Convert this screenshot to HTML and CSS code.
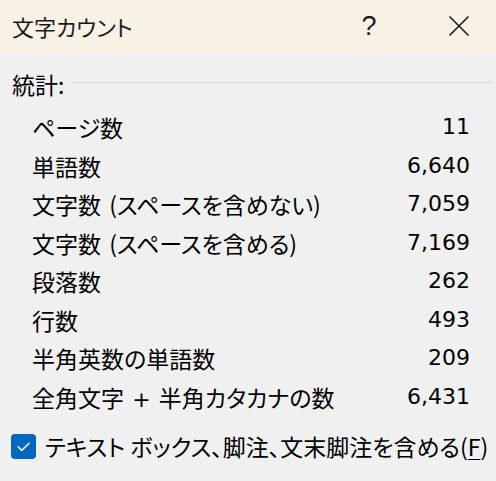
FILE: index.html
```html
<!DOCTYPE html>
<html lang="ja">
<head>
<meta charset="utf-8">
<link rel="stylesheet" href="styles.css">
</head>
<body>
<div class="dialog">
  <div class="titlebar">
    <div class="title">文字カウント</div>
    <div class="help">?</div>
    <div class="close">
      <svg width="22" height="22" viewBox="0 0 22 22"><path d="M1.5 1.5 L20.5 20.5 M20.5 1.5 L1.5 20.5" stroke="#1a1a1a" stroke-width="1.6" fill="none"/></svg>
    </div>
  </div>
  <div class="content">
    <div class="group-header">
      <span class="group-label">統計:</span>
      <span class="group-line"></span>
    </div>
    <div class="stats">
      <div class="row"><span class="label">ページ数</span><span class="value">11</span></div>
      <div class="row"><span class="label">単語数</span><span class="value">6,640</span></div>
      <div class="row"><span class="label">文字数 (スペースを含めない)</span><span class="value">7,059</span></div>
      <div class="row"><span class="label">文字数 (スペースを含める)</span><span class="value">7,169</span></div>
      <div class="row"><span class="label">段落数</span><span class="value">262</span></div>
      <div class="row"><span class="label">行数</span><span class="value">493</span></div>
      <div class="row"><span class="label">半角英数の単語数</span><span class="value">209</span></div>
      <div class="row"><span class="label">全角文字 <span class="plus">+</span> 半角カタカナの数</span><span class="value">6,431</span></div>
    </div>
    <div class="check-row">
      <span class="checkbox">
        <svg width="25" height="25" viewBox="0 0 25 25"><path d="M7 12.8 L10.8 16.4 L18 9.2" stroke="#ffffff" stroke-width="1.5" fill="none" stroke-linecap="round" stroke-linejoin="round"/></svg>
      </span>
      <span class="check-label">テキスト ボックス、脚注、文末脚注を含める(<u>F</u>)</span>
    </div>
  </div>
</div>
</body>
</html>
```

FILE: styles.css
```css
html, body {
  margin: 0;
  padding: 0;
}
body {
  background: #f0f0f0;
  font-family: "Noto Sans CJK JP", "Noto Sans", sans-serif;
  color: #000;
  font-feature-settings: "palt";
}
.dialog {
  width: 496px;
  height: 481px;
  background: #f0f0f0;
  overflow: hidden;
}
.titlebar {
  height: 52px;
  background: #f8f1e6;
  display: flex;
  align-items: center;
  padding-left: 12px;
}
.title {
  font-size: 22px;
  line-height: 52px;
  flex: 1;
  color: #1a1a1a;
}
.help {
  width: 28px;
  text-align: center;
  font-size: 27px;
  line-height: 52px;
  color: #1a1a1a;
  font-family: "Liberation Sans", sans-serif;
  margin-right: 65px;
}
.close {
  width: 22px;
  height: 22px;
  margin-right: 26px;
  display: flex;
}
.content {
  padding: 14px 0 0 12px;
}
.group-header {
  display: flex;
  align-items: center;
  height: 36px;
}
.group-label {
  font-size: 23px;
  line-height: 36px;
  padding-right: 6px;
}
.group-line {
  flex: 1;
  height: 1px;
  background: #d9d9d9;
  margin-top: -4px;
  margin-right: 4px;
}
.stats {
  padding: 6px 26px 0 20px;
}
.row {
  display: flex;
  justify-content: space-between;
  height: 38.5px;
  line-height: 38.5px;
  font-size: 23px;
}
.label {
  word-spacing: 3px;
}
.plus {
  font-family: "DejaVu Sans", sans-serif;
  font-size: 22px;
}
.value {
  font-family: "DejaVu Sans", sans-serif;
  font-size: 22px;
}
.check-row {
  display: flex;
  align-items: center;
  margin-top: 15px;
  margin-left: -1px;
}
.checkbox {
  width: 25px;
  height: 25px;
  border-radius: 4px;
  background: #0067c0;
  display: flex;
  margin-right: 9px;
}
.check-label {
  font-size: 23px;
  line-height: 30px;
}
.check-label u {
  text-decoration-thickness: 1px;
  text-underline-offset: 3px;
}
```
